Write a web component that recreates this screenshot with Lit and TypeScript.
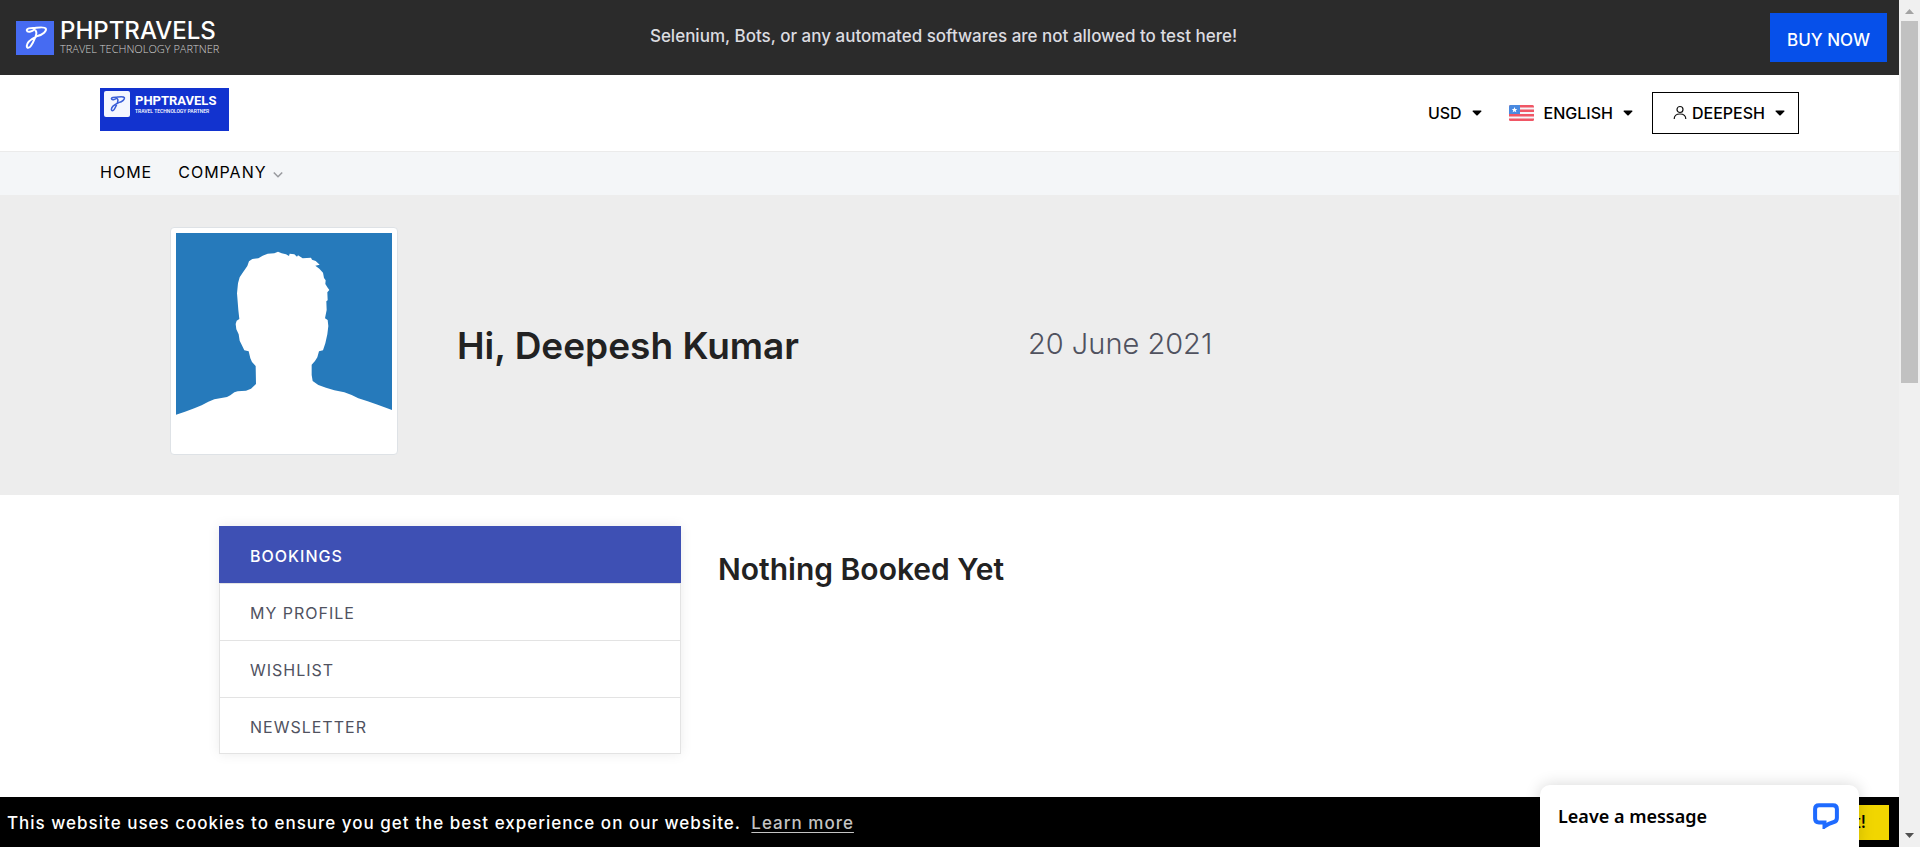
import { LitElement, html, css, svg } from "lit";
import { customElement, state } from "lit/decorators.js";
import { classMap } from "lit/directives/class-map.js";

const squiggle = svg`
  <path d="M18.500 8.600c-2.500 2.200-7.300 3-7.700.700C10.600 7.300 14 6.900 18 7c4-.400 10.500-1.700 11.800.600C30.800 10 27 13.500 21.500 15" />
  <path d="M19.500 9.500c1.800 2 1 4-.300 6.800-1.200 3-2.700 6.200-4.200 8.500-1.700 2.600-4.300 2.600-4.200 0 .2-2.600 3.500-6.300 9.500-9.200" />`;

@customElement("drop-caret")
export class DropCaret extends LitElement {
  static styles = css`
    :host { display: inline-flex; }
    svg { display: block; width: 10px; height: 6px; }
  `;
  render() {
    return html`<svg viewBox="0 0 10 6" aria-hidden="true"><path d="M1 .5h8q.9.3.3 1L5.700 5.200q-.7.5-1.400 0L.700 1.500Q.1.8 1 .5z" fill="#000" /></svg>`;
  }
}

@customElement("top-banner")
export class TopBanner extends LitElement {
  static styles = css`
    :host { display: block; background: #2b2b2b; color: #dcdce0; }
    .bar {
      display: grid;
      grid-template-columns: 1fr auto 1fr;
      align-items: center;
      padding: 13px 12px 13px 16px;
    }
    .logo { display: flex; align-items: center; gap: 6px; justify-self: start; color: #fff; text-decoration: none; }
    .mark { width: 38px; height: 34px; background: #466bf2; fill: none; stroke: #fff; stroke-width: 2; stroke-linecap: round; }
    .words { display: flex; flex-direction: column; }
    .name { font: 500 24px/22px Inter, sans-serif; }
    .tag { font: 300 11px/14px "Open Sans", sans-serif; color: #d0d0d0; }
    .note { margin: 0; padding: 0 16px 3px 0; font-size: 17px; line-height: 24px; font-weight: 500; }
    .buy {
      justify-self: end;
      padding: 15px 17px 10px;
      background: #0650ea;
      color: #fff;
      font-size: 17px;
      line-height: 24px;
      font-weight: 500;
      text-decoration: none;
    }
  `;
  render() {
    return html`
      <div class="bar">
        <a class="logo" href="#">
          <svg class="mark" viewBox="0 0 38 34" aria-hidden="true">${squiggle}</svg>
          <span class="words">
            <span class="name">PHPTRAVELS</span>
            <span class="tag">TRAVEL TECHNOLOGY PARTNER</span>
          </span>
        </a>
        <p class="note">Selenium, Bots, or any automated softwares are not allowed to test here!</p>
        <a class="buy" href="#">BUY NOW</a>
      </div>`;
  }
}

@customElement("site-header")
export class SiteHeader extends LitElement {
  static styles = css`
    :host { display: block; }
    .head {
      display: flex;
      justify-content: space-between;
      align-items: flex-start;
      padding: 13px 100px 17px;
      border-bottom: 1px solid #ebebeb;
      background: #fff;
    }
    .brand {
      display: flex;
      align-items: flex-start;
      gap: 5px;
      width: 125px;
      padding: 3px 0 14px 4px;
      background: #1233cf;
      color: #fff;
      text-decoration: none;
      font-family: Roboto, sans-serif;
      overflow: hidden;
      margin-bottom: 3px;
    }
    .mark { flex: none; width: 26px; height: 26px; border-radius: 2px; background: #f4f7ff; fill: none; stroke: #3a5fd8; stroke-width: 2.200; stroke-linecap: round; }
    .words { display: flex; flex-direction: column; padding-top: 3px; }
    .name { font-size: 13px; line-height: 14px; font-weight: 700; }
    .tag { font-size: 5px; line-height: 6px; font-weight: 500; }
    .tools { display: flex; align-items: center; gap: 27px; padding-top: 4px; }
    .tool {
      display: flex;
      align-items: center;
      gap: 10px;
      padding: 0;
      border: 0;
      background: none;
      color: #000;
      font: 500 16px/20px Inter, sans-serif;
      cursor: pointer;
    }
    .account { gap: 5px; margin-left: -8px; padding: 10px 13px 10px 20px; border: 1px solid #000; }
    .account drop-caret { margin-left: 5px; }
    .flag { width: 25px; height: 16px; }
    .person { width: 14px; height: 16px; fill: none; stroke: #111; stroke-width: 1.200; }
    nav { background: #f4f6f8; }
    .links { display: flex; gap: 26px; margin: 0; padding: 9px 100px 11px; list-style: none; }
    .links a {
      display: flex;
      align-items: center;
      gap: 6px;
      color: #000;
      font: 400 16px/23px Inter, sans-serif;
      letter-spacing: 1px;
      text-decoration: none;
    }
    .chev { width: 10px; height: 12px; fill: none; stroke: #9a9ca0; stroke-width: 1.600; }
  `;
  render() {
    return html`
      <header class="head">
        <a class="brand" href="#">
          <svg class="mark" viewBox="0 0 38 38" aria-hidden="true"><g transform="translate(0 2)">${squiggle}</g></svg>
          <span class="words">
            <span class="name">PHPTRAVELS</span>
            <span class="tag">TRAVEL TECHNOLOGY PARTNER</span>
          </span>
        </a>
        <div class="tools">
          <button class="tool" type="button">USD <drop-caret></drop-caret></button>
          <button class="tool" type="button">
            <svg class="flag" viewBox="0 0 25 16" aria-hidden="true">
              <clipPath id="r"><rect width="25" height="16" rx="1.500" /></clipPath>
              <g clip-path="url(#r)">
                <rect width="25" height="16" fill="#f5f5f8" />
                <path d="M0 1.200h25M0 5.700h25M0 10.200h25M0 14.700h25" stroke="#f05665" stroke-width="2.600" />
                <rect width="11" height="9" fill="#4a8ae0" />
                <path d="M5.500 2l.8 1.900 2 .1-1.500 1.300.5 2-1.800-1.100-1.800 1.100.5-2L2.700 4l2-.1z" fill="#fff" />
              </g>
            </svg>
            ENGLISH <drop-caret></drop-caret>
          </button>
          <button class="tool account" type="button">
            <svg class="person" viewBox="0 0 14 16" aria-hidden="true"><circle cx="7" cy="4.500" r="3" /><path d="M1.200 14c0-3.500 2-5 5.800-5s5.800 1.500 5.800 5" /></svg>
            DEEPESH <drop-caret></drop-caret>
          </button>
        </div>
      </header>
      <nav>
        <ul class="links">
          <li><a href="#">HOME</a></li>
          <li><a href="#">COMPANY <svg class="chev" viewBox="0 0 10 12" aria-hidden="true"><path d="M.8 5.500 5 9.700l4.200-4.200" /></svg></a></li>
        </ul>
      </nav>`;
  }
}

@customElement("profile-hero")
export class ProfileHero extends LitElement {
  static styles = css`
    :host { display: block; background: #ededed; }
    .hero {
      display: grid;
      grid-template-columns: 287px 571fr 771fr;
      align-items: center;
      padding: 32px 100px 40px 170px;
    }
    .card {
      justify-self: start;
      padding: 5px;
      border: 1px solid #dee2e6;
      border-radius: 4px;
      background: #fff;
    }
    .card svg { display: block; width: 216px; height: 216px; }
    h1 { margin: 0; padding-top: 9px; color: #222; font-size: 37px; line-height: 44px; font-weight: 600; }
    time { padding-top: 6px; color: #50525f; font-size: 29px; line-height: 36px; font-weight: 300; }
  `;
  render() {
    return html`
      <section class="hero">
        <div class="card">
          <svg viewBox="75 69 648 648" role="img" aria-label="Profile picture">
            <rect x="75" y="69" width="648" height="648" fill="#267abb" />
            <path fill="#fff" d="M75 614 102 605 130 595 152 586 172 575 190 568 228 561 238 556 250 547 260 544 285 542 300 536 315 522 314 468 303 456 298 445 293 424 280 421 272 404 266 392 263 373 256 358 254 342 257 332 265 327 262 300 258 250 261 220 266 202 275 188 289 168 294 154 304 147 322 145 335 137 350 131 370 130 381 125 392 130 405 133 414 138 416 131 430 133 438 140 441 136 455 145 480 143 483 149 494 153 506 164 493 167 505 176 516 188 519 204 524 211 523 222 529 232 535 240 529 247 530 271 526 274 527 300 522 325 530 330 532 348 529 373 523 400 516 421 504 424 499 442 492 453 482 464 482 495 485 513 502 525 525 533 550 541 580 547 602 555 622 565 650 574 680 584 723 600V717H75z" />
          </svg>
        </div>
        <h1>Hi, Deepesh Kumar</h1>
        <time datetime="2021-06-20">20 June 2021</time>
      </section>`;
  }
}

@customElement("account-panel")
export class AccountPanel extends LitElement {
  static styles = css`
    :host { display: block; }
    .panel {
      display: grid;
      grid-template-columns: 462fr 962fr;
      column-gap: 37px;
      align-items: start;
      padding: 31px 219px;
    }
    .menu {
      display: flex;
      flex-direction: column;
      border: 1px solid #e3e3e3;
      background: #fff;
      box-shadow: 0 0 12px rgba(0, 0, 0, 0.08);
    }
    .item {
      padding: 19px 30px 17px;
      border: 0;
      border-top: 1px solid #e3e3e3;
      background: none;
      color: #50525f;
      font: 400 16px/20px Inter, sans-serif;
      letter-spacing: 1px;
      text-align: left;
      cursor: pointer;
    }
    .item:last-child { padding-bottom: 16px; }
    .on { margin: -1px -1px 0; padding: 20px 31px 17px; border-top: 0; background: #3e50b4; color: #fff; font-weight: 500; }
    h2 { margin: 0; padding-top: 23px; color: #222; font-size: 30px; line-height: 40px; font-weight: 600; }
  `;
  @state() private current = "BOOKINGS";
  render() {
    return html`
      <main class="panel">
        <div class="menu">
          ${["BOOKINGS", "MY PROFILE", "WISHLIST", "NEWSLETTER"].map(
            (name) => html`<button type="button" class=${classMap({ item: true, on: name === this.current })} @click=${() => (this.current = name)}>${name}</button>`
          )}
        </div>
        <h2>Nothing Booked Yet</h2>
      </main>`;
  }
}

@customElement("cookie-bar")
export class CookieBar extends LitElement {
  static styles = css`
    :host { display: block; background: #000; color: #fff; }
    .bar { display: flex; align-items: center; justify-content: space-between; padding: 8px 10px 7px 7px; }
    p { margin: 0; font-size: 17px; line-height: 24px; font-weight: 500; letter-spacing: 1px; }
    a { margin-left: 5px; color: #c4c4c4; text-underline-offset: 3px; }
    button { padding: 0 23px; border: 0; background: #f1d600; color: #000; font: 500 17px/35px Inter, sans-serif; cursor: pointer; }
  `;
  render() {
    return html`
      <div class="bar">
        <p>This website uses cookies to ensure you get the best experience on our website. <a href="#">Learn more</a></p>
        <button type="button">Got it!</button>
      </div>`;
  }
}

@customElement("app-root")
export class AppRoot extends LitElement {
  static styles = css`
    :host {
      display: grid;
      grid-template-columns: 1fr 21px;
      height: 100vh;
      overflow: hidden;
      background: #fff;
      font-family: Inter, sans-serif;
    }
    .page { position: relative; display: flex; flex-direction: column; min-width: 0; }
    account-panel { flex: 1; }
    .chat {
      position: absolute;
      right: 40px;
      bottom: 0;
      display: flex;
      align-items: center;
      justify-content: space-between;
      width: 319px;
      padding: 18px 20px 18px 18px;
      border: 0;
      border-radius: 10px 10px 0 0;
      background: #fff;
      box-shadow: 0 0 16px rgba(0, 0, 0, 0.16);
      color: #000;
      font: 600 18px/26px "Noto Sans", sans-serif;
      cursor: pointer;
    }
    .chat svg { width: 26px; height: 26px; }
    .rail { display: flex; flex-direction: column; align-items: center; background: #f0f0f0; }
    .rail svg { flex: none; width: 17px; height: 21px; }
    .track { flex: 1; width: 17px; }
    .thumb { height: 45%; background: #c1c1c1; }
  `;
  render() {
    return html`
      <div class="page">
        <top-banner></top-banner>
        <site-header></site-header>
        <profile-hero></profile-hero>
        <account-panel></account-panel>
        <cookie-bar></cookie-bar>
        <button class="chat" type="button">
          Leave a message
          <svg viewBox="0 0 26 26" aria-hidden="true">
            <path d="M6 2.200h14c2.600 0 3.900 1.300 3.900 3.900v8.900c0 2.200-1 3.500-3 4-3.300.9-6.200 2-9.400 4.500v-4H6c-2.600 0-3.900-1.300-3.900-3.900V6.100c0-2.600 1.300-3.900 3.900-3.900z" fill="none" stroke="#1f6bff" stroke-width="4" />
          </svg>
        </button>
      </div>
      <div class="rail" aria-hidden="true">
        <svg viewBox="0 0 17 21"><path d="M4 14l4.500-5 4.500 5z" fill="#a3a3a3" /></svg>
        <div class="track"><div class="thumb"></div></div>
        <svg viewBox="0 0 17 21"><path d="M4 7l4.500 5L13 7z" fill="#505050" /></svg>
      </div>`;
  }
}
